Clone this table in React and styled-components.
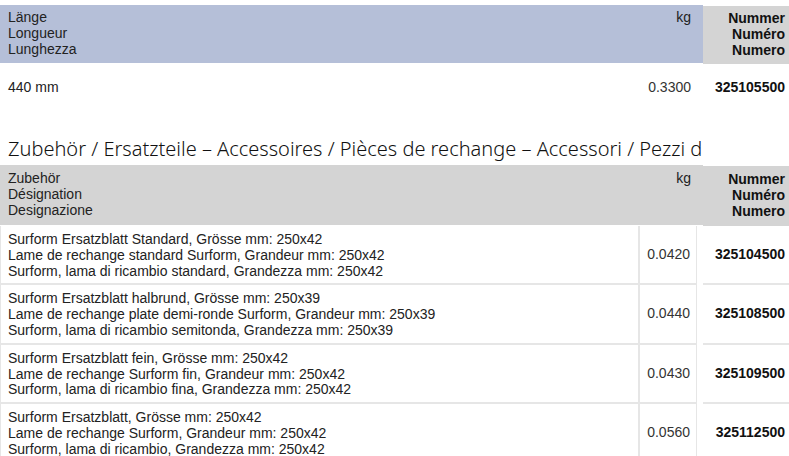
// Product table: length variant + accessories list

import React from "react";
import styled, { createGlobalStyle } from "styled-components";

const Global = createGlobalStyle`
  html, body { margin: 0; padding: 0; background: #fff; }
  body { font-family: "Liberation Sans", Arial, sans-serif; color: #222; }
`;

const Page = styled.div`
  width: 789px;
  padding-top: 5px;
`;

// ==== HEADER ====
const Head = styled.div`
  display: flex;
  align-items: flex-start;
`;
const HeadMain = styled.div`
  flex: 1;
  display: flex;
  justify-content: space-between;
  background: ${(p) => p.$bg};
  padding: ${(p) => p.$pad} 12px 0 8px;
  height: ${(p) => p.$h}px;
  box-sizing: border-box;
  font-size: 14px;
  line-height: 16px;
`;
const HeadNum = styled.div`
  width: 86px;
  box-sizing: border-box;
  background: #d4d4d4;
  margin-top: 1px;
  padding: ${(p) => p.$pad} 4px 0 0;
  height: ${(p) => p.$h}px;
  text-align: right;
  font-weight: bold;
  font-size: 14px;
  line-height: 16px;
  color: #111;
`;
const Lines = styled.div`
  white-space: nowrap;
`;

// ==== BODY ====
const Row = styled.div`
  display: flex;
  font-size: 14px;
  line-height: 15.8px;
`;
const Desc = styled.div`
  flex: 1;
  padding: 6px 0 4px 7px;
  border-left: 1px solid #e6e6e6;
  border-right: 2px solid #e6e6e6;
  border-bottom: 2px solid #e6e6e6;
  white-space: nowrap;
`;
const Kg = styled.div`
  width: 57px;
  box-sizing: border-box;
  display: flex;
  align-items: center;
  justify-content: flex-end;
  padding-right: 6px;
  border-right: 1px solid #e6e6e6;
  border-bottom: 2px solid #e6e6e6;
  color: #333;
`;
const Num = styled.div`
  width: 86px;
  margin-left: 6px;
  box-sizing: border-box;
  display: flex;
  align-items: center;
  justify-content: flex-end;
  padding-right: 4px;
  font-weight: bold;
  font-size: 14px;
  color: #111;
  border-bottom: 2px solid #e6e6e6;
`;

const PlainRow = styled.div`
  display: flex;
  align-items: center;
  height: 46px;
  font-size: 14px;
`;
const PlainDesc = styled.div`
  flex: 1;
  padding-left: 8px;
`;
const PlainKg = styled.div`
  padding-right: 12px;
  color: #333;
`;
const PlainNum = styled.div`
  width: 86px;
  text-align: right;
  padding-right: 4px;
  box-sizing: border-box;
  font-weight: bold;
  font-size: 14px;
  color: #111;
`;

// the page cuts this heading at the number column, as in the source
const Title = styled.h2`
  margin: 27px 0 4px 0;
  width: 703px;
  overflow: hidden;
  white-space: nowrap;
  padding-left: 8px;
  box-sizing: border-box;
  font-family: "Noto Sans", sans-serif;
  font-weight: 300;
  font-size: 20px;
  line-height: 24px;
  color: #111;
`;

const numLabels = ["Nummer", "Numéro", "Numero"];

const items = [
  {
    lines: [
      "Surform Ersatzblatt Standard, Grösse mm: 250x42",
      "Lame de rechange standard Surform, Grandeur mm: 250x42",
      "Surform, lama di ricambio standard, Grandezza mm: 250x42",
    ],
    kg: "0.0420",
    num: "325104500",
  },
  {
    lines: [
      "Surform Ersatzblatt halbrund, Grösse mm: 250x39",
      "Lame de rechange plate demi-ronde Surform, Grandeur mm: 250x39",
      "Surform, lama di ricambio semitonda, Grandezza mm: 250x39",
    ],
    kg: "0.0440",
    num: "325108500",
  },
  {
    lines: [
      "Surform Ersatzblatt fein, Grösse mm: 250x42",
      "Lame de rechange Surform fin, Grandeur mm: 250x42",
      "Surform, lama di ricambio fina, Grandezza mm: 250x42",
    ],
    kg: "0.0430",
    num: "325109500",
  },
  {
    lines: [
      "Surform Ersatzblatt, Grösse mm: 250x42",
      "Lame de rechange Surform, Grandeur mm: 250x42",
      "Surform, lama di ricambio, Grandezza mm: 250x42",
    ],
    kg: "0.0560",
    num: "325112500",
  },
];

function Header({ bg, labels, pad, h }) {
  return (
    <Head>
      <HeadMain $bg={bg} $pad={pad} $h={h}>
        <Lines>
          {labels.map((l) => (
            <div key={l}>{l}</div>
          ))}
        </Lines>
        <div>kg</div>
      </HeadMain>
      <HeadNum $pad={pad} $h={h}>
        {numLabels.map((l) => (
          <div key={l}>{l}</div>
        ))}
      </HeadNum>
    </Head>
  );
}

function App() {
  return (
    <Page>
      <Global />
      <Header bg="#b5bfd8" labels={["Länge", "Longueur", "Lunghezza"]} pad="4px" h={58} />
      <PlainRow>
        <PlainDesc>440 mm</PlainDesc>
        <PlainKg>0.3300</PlainKg>
        <PlainNum>325105500</PlainNum>
      </PlainRow>

      <Title>Zubehör / Ersatzteile – Accessoires / Pièces de rechange – Accessori / Pezzi di ricambio</Title>
      <Header bg="#d4d4d4" labels={["Zubehör", "Désignation", "Designazione"]} pad="5px" h={60} />
      {items.map((it) => (
        <Row key={it.num}>
          <Desc>
            {it.lines.map((l) => (
              <div key={l}>{l}</div>
            ))}
          </Desc>
          <Kg>{it.kg}</Kg>
          <Num>{it.num}</Num>
        </Row>
      ))}
    </Page>
  );
}

export default App;
